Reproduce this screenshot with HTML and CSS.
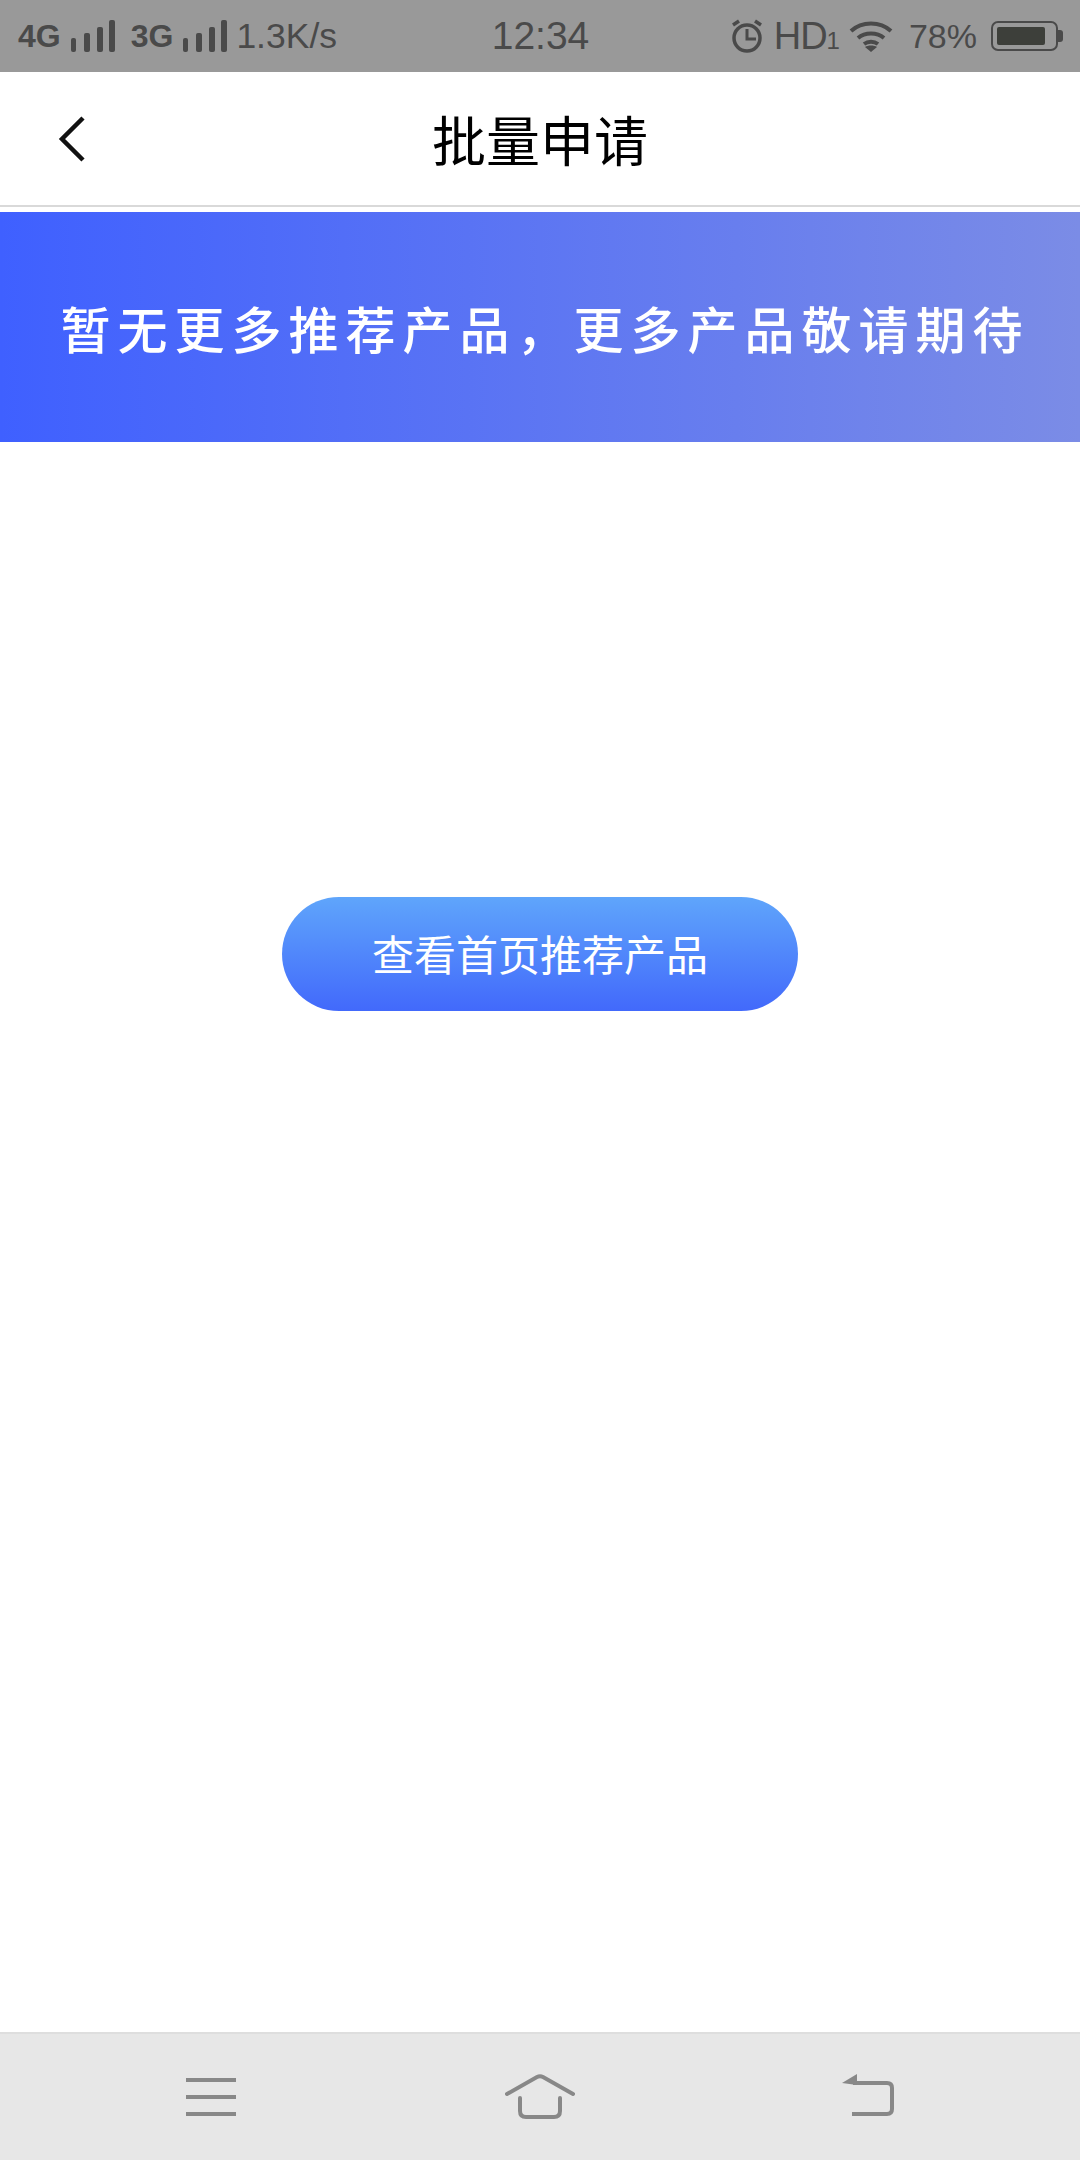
FILE: index.html
```html
<!DOCTYPE html>
<html lang="zh-CN">
<head>
    <meta charset="UTF-8">
    <meta name="viewport" content="width=device-width, initial-scale=1.0">
    <title>批量申请</title>
    <link rel="stylesheet" href="styles.css">
</head>
<body>
    <div class="status-bar">
        <div class="status-left">
            <span class="net">4G</span>
            <svg class="signal" width="44" height="32" viewBox="0 0 44 32"><rect x="0" y="18" width="5" height="14" rx="2"/><rect x="13" y="13" width="6" height="19" rx="2"/><rect x="26" y="7" width="6" height="25" rx="2"/><rect x="38" y="0" width="6" height="32" rx="2"/></svg>
            <span class="net net-second">3G</span>
            <svg class="signal" width="44" height="32" viewBox="0 0 44 32"><rect x="0" y="18" width="5" height="14" rx="2"/><rect x="13" y="13" width="6" height="19" rx="2"/><rect x="26" y="7" width="6" height="25" rx="2"/><rect x="38" y="0" width="6" height="32" rx="2"/></svg>
            <span class="speed">1.3K/s</span>
        </div>
        <div class="status-time">12:34</div>
        <div class="status-right">
            <svg class="alarm" width="34" height="34" viewBox="0 0 34 34" fill="none" stroke="#4a4a4a"><circle cx="17" cy="19" r="13" stroke-width="3.5"/><path d="M17 10v10h9" stroke-width="3"/><path d="M3 6l6-4M31 6l-6-4" stroke-width="3.5"/></svg>
            <span class="hd">HD<small>1</small></span>
            <svg class="wifi" width="44" height="32" viewBox="0 0 44 32" fill="none" stroke="#4a4a4a" stroke-width="4"><path d="M2 11c11-10 29-10 40 0"/><path d="M9 18c7-6 19-6 26 0"/><path d="M15 24c4-3 10-3 14 0"/><path d="M16 27c3-2 9-2 12 0l-6 5z" fill="#4a4a4a" stroke="none"/></svg>
            <span class="battery-pct">78%</span>
            <div class="battery">
                <div class="battery-body"><div class="battery-fill"></div></div>
                <div class="battery-tip"></div>
            </div>
        </div>
    </div>

    <div class="nav-bar">
        <svg class="back" width="28" height="48" viewBox="0 0 28 48" fill="none" stroke="#111" stroke-width="4.5"><path d="M25 3L4 24l21 21"/></svg>
        <div class="nav-title">批量申请</div>
    </div>

    <div class="banner">暂无更多推荐产品，更多产品敬请期待</div>

    <div class="content">
        <button class="home-btn">查看首页推荐产品</button>
    </div>

    <div class="bottom-bar">
        <svg width="60" height="60" viewBox="0 0 60 60" fill="none" stroke="#888" stroke-width="4"><path d="M5 13h50M5 30h50M5 47h50"/></svg>
        <svg width="70" height="60" viewBox="0 0 70 60" fill="none" stroke="#888" stroke-width="4" stroke-linecap="round"><path d="M2 27L32 10q3-1.5 6 0l30 17"/><path d="M15 31v13q0 6 6 6h28q6 0 6-6V31"/></svg>
        <svg width="60" height="60" viewBox="0 0 60 60" fill="none" stroke="#888" stroke-width="4"><path d="M14 16h34q5 0 5 5v21q0 5-5 5H13"/><path d="M3 16L18 7v11z" fill="#888" stroke="none"/></svg>
    </div>
</body>
</html>
```

FILE: styles.css
```css
* {
    box-sizing: border-box;
}
body {
    margin: 0;
    width: 1080px;
    height: 2160px;
    display: flex;
    flex-direction: column;
    background-color: #fff;
    font-family: "Noto Sans CJK SC", "Liberation Sans", sans-serif;
}
.status-bar {
    height: 72px;
    padding: 0 17px 0 18px;
    display: grid;
    grid-template-columns: 1fr auto 1fr;
    align-items: center;
    background-color: #999;
    color: #4a4a4a;
    font-family: "Liberation Sans", sans-serif;
}
.status-left, .status-right {
    display: flex;
    align-items: center;
}
.status-right {
    justify-content: flex-end;
}
.net {
    font-size: 32px;
    font-weight: bold;
    line-height: 32px;
}
.net-second {
    margin-left: 16px;
}
.signal {
    margin-left: 10px;
    fill: #4a4a4a;
}
.speed {
    margin-left: 9px;
    font-size: 35.5px;
}
.status-time {
    font-size: 39px;
}
.alarm {
    margin-right: 10px;
}
.hd {
    font-size: 38px;
    letter-spacing: -1px;
}
.hd small {
    font-size: 24px;
}
.wifi {
    margin-left: 10px;
}
.battery-pct {
    margin-left: 16px;
    font-size: 34px;
}
.battery {
    margin-left: 14px;
    display: flex;
    align-items: center;
}
.battery-body {
    width: 67px;
    height: 30px;
    padding: 4px;
    border: 2px solid #4a4a4a;
    border-radius: 7px;
}
.battery-fill {
    width: 48px;
    height: 100%;
    background-color: #3d3f3a;
    border-radius: 2px;
}
.battery-tip {
    width: 5px;
    height: 12px;
    background-color: #4a4a4a;
    border-radius: 0 3px 3px 0;
}
.nav-bar {
    height: 135px;
    margin-bottom: 5px;
    padding-left: 58px;
    display: grid;
    grid-template-columns: 28px 1fr 86px;
    align-items: center;
    border-bottom: 2px solid #d9d9d9;
}
.nav-title {
    text-align: center;
    font-size: 54px;
    color: #000;
}
.banner {
    height: 230px;
    padding-left: 10px;
    display: flex;
    align-items: center;
    justify-content: center;
    background: linear-gradient(to right, #3f60ff, #7b8ce6);
    color: #fff;
    font-size: 50px;
    font-weight: 500;
    letter-spacing: 7px;
    white-space: nowrap;
}
.content {
    flex: 1;
    padding-top: 455px;
    display: flex;
    flex-direction: column;
    align-items: center;
}
.home-btn {
    width: 516px;
    height: 114px;
    padding-bottom: 4px;
    border: none;
    border-radius: 57px;
    background: linear-gradient(to bottom, #5fa5fb, #4269fb);
    color: #fff;
    font-family: inherit;
    font-size: 42px;
}
.bottom-bar {
    height: 128px;
    display: flex;
    align-items: center;
    justify-content: center;
    gap: 264px;
    background-color: #e7e7e7;
    border-top: 2px solid #dedede;
}
```
